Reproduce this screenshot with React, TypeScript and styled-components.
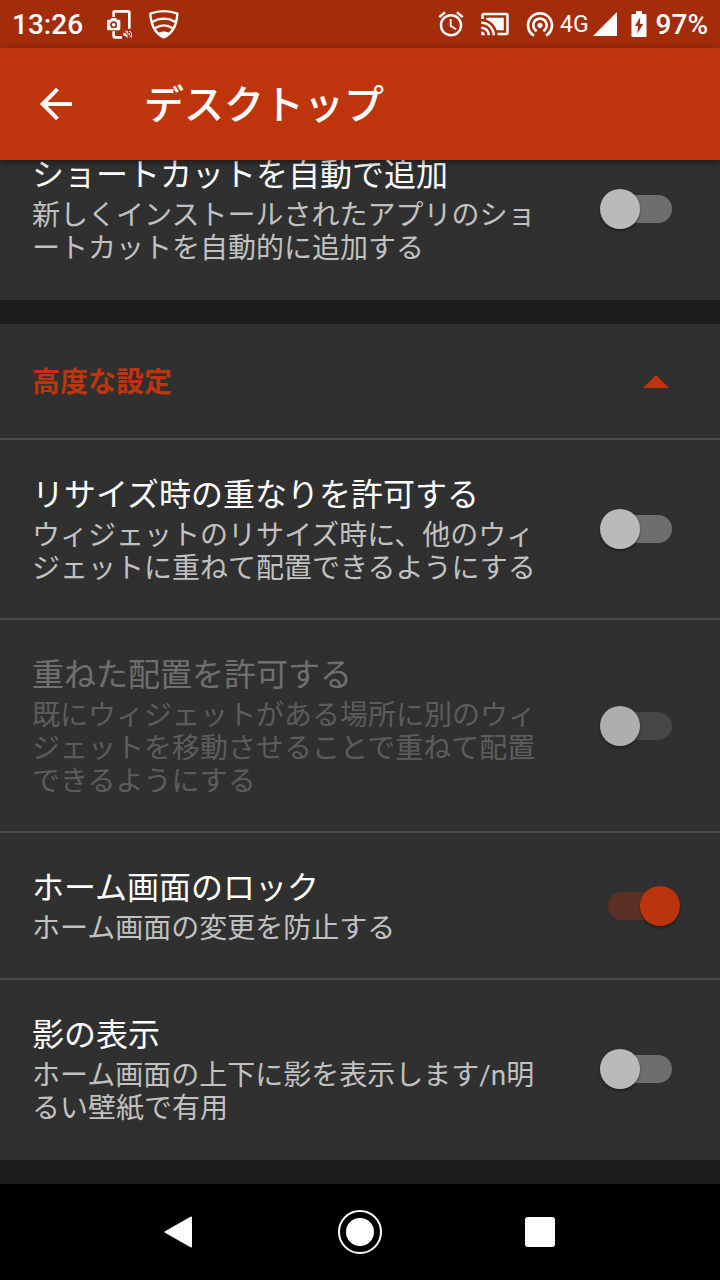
import React, { useState } from "react";
import styled, { createGlobalStyle } from "styled-components";
import { MdAlarm, MdCastConnected, MdWifiTethering } from "react-icons/md";

const accent = "#be340c";

const GlobalStyle = createGlobalStyle`
  *, *::before, *::after { box-sizing: border-box; }
  body {
    margin: 0;
    background: #1d1d1d;
    font-family: Roboto, "Noto Sans CJK JP", sans-serif;
    color: #fff;
  }
`;

const Screen = styled.div`
  display: flex;
  flex-direction: column;
  min-height: 100vh;
`;

const StatusBar = styled.div`
  display: flex;
  align-items: center;
  justify-content: space-between;
  height: 48px;
  padding: 2px 12px 0;
  background: #a32c0b;
  font-size: 28px;
  font-weight: 500;
  line-height: 32px;
`;

const StatusGroup = styled.div<{ $gap: number }>`
  display: flex;
  align-items: center;
  gap: ${(p) => p.$gap}px;

  svg {
    display: block;
    flex: none;
    margin-bottom: 2px;
  }
`;

const NetworkType = styled.span`
  font-size: 23px;
  font-weight: 400;
`;

const AppBar = styled.header`
  position: relative;
  z-index: 1;
  display: flex;
  align-items: center;
  gap: 64px;
  height: 112px;
  padding: 0 32px;
  background: ${accent};
  box-shadow: 0 2px 8px rgba(0, 0, 0, 0.5);
`;

const IconButton = styled.button`
  display: flex;
  align-items: center;
  justify-content: center;
  width: 48px;
  height: 48px;
  padding: 0;
  border: 0;
  background: none;
  color: inherit;
`;

const Title = styled.h1`
  margin: 0;
  padding-top: 4px;
  font-size: 40px;
  font-weight: 500;
  line-height: 48px;
`;

const List = styled.main`
  flex: 1;
  overflow: hidden;
`;

const Scrolled = styled.div`
  display: flex;
  flex-direction: column;
  gap: 24px;
  margin-top: -40px;
  padding-bottom: 24px;
`;

const Card = styled.section`
  background: #303030;
`;

const SectionToggle = styled.button`
  display: flex;
  align-items: center;
  justify-content: space-between;
  width: 100%;
  height: 116px;
  padding: 2px 50px 0 32px;
  border: 0;
  border-bottom: 2px solid #4a4a4a;
  background: none;
  color: ${accent};
  font-family: inherit;
  font-size: 28px;
  font-weight: 700;
  line-height: 33px;
`;

const Row = styled.label`
  display: flex;
  align-items: center;
  gap: 48px;
  padding: 34px 40px 34px 32px;
  border-bottom: 2px solid #4a4a4a;

  &:last-child {
    border-bottom-color: #303030;
  }
`;

const RowText = styled.span<{ $disabled: boolean }>`
  display: flex;
  flex: 1;
  flex-direction: column;
  gap: 4px;
  padding-top: 2px;
  opacity: ${(p) => (p.$disabled ? 0.3 : 1)};
  line-break: anywhere;
`;

const RowTitle = styled.span`
  font-size: 32px;
  line-height: 38px;
`;

const RowDescription = styled.span`
  padding-top: 1px;
  margin-bottom: -1px;
  color: #c1c1c1;
  font-size: 28px;
  line-height: 33px;
`;

const Switch = styled.input`
  appearance: none;
  position: relative;
  flex: none;
  width: 80px;
  height: 40px;
  margin: 0;

  &::before {
    content: "";
    position: absolute;
    inset: 6px 8px;
    border-radius: 14px;
    background: #6e6e6e;
  }

  &::after {
    content: "";
    position: absolute;
    top: 0;
    left: 0;
    width: 40px;
    height: 40px;
    border-radius: 50%;
    background: #bababa;
    box-shadow: 0 2px 3px rgba(0, 0, 0, 0.35);
  }

  &:checked::before {
    background: #5b3025;
  }

  &:checked::after {
    left: 40px;
    background: #ba340c;
  }

  &:disabled::before {
    background: #464646;
  }

  &:disabled::after {
    background: #aeaeae;
  }
`;

const NavBar = styled.nav`
  display: flex;
  align-items: center;
  justify-content: space-around;
  height: 96px;
  padding: 0 12.5%;
  background: #000;
`;

const ScreenshotIcon = () => (
  <svg width="27" height="31" viewBox="318 26 81 93" fill="none" aria-hidden="true">
    <path d="M341 50V36q0-3 3-3h41q3 0 3 3v49" stroke="#fff" strokeWidth="8" />
    <path d="M341 93v15q0 3 3 3h22" stroke="#fff" strokeWidth="8" />
    <path
      fill="#fff"
      fillRule="evenodd"
      d="M325 58h6l3-5h14l3 5h6q4 0 4 4v24q0 4-4 4h-32q-4 0-4-4V62q0-4 4-4zM341 63a10.500 10.500 0 1 0 0 21a10.500 10.500 0 1 0 0-21z"
    />
    <circle cx="341" cy="73.500" r="5.500" fill="#fff" />
    <path d="M370 97h6l7-7v23l-7-7h-6z" fill="#fff" />
    <path d="M387 92q8 3 8 10t-6 11M387 98q3 4 0 8" stroke="#fff" strokeWidth="3" />
    <path d="M371 91l24 22" stroke="#a32c0b" strokeWidth="4" />
    <path d="M374 90l22 22" stroke="#fff" strokeWidth="2" />
  </svg>
);

const ShieldIcon = () => (
  <svg width="32" height="31" viewBox="443 26 96 93" fill="none" stroke="#fff" aria-hidden="true">
    <path
      d="M450 40q41-15 81 0q-1 25-11 44q-10 18-30 27q-19-9-29-27q-10-19-11-44z"
      strokeWidth="7"
      strokeLinejoin="round"
    />
    <path d="M455 65q36-20 71 0M464 84q27-18 53 0" strokeWidth="7" />
    <path d="M475 98q15-8 31 0l-16 12z" fill="#fff" strokeWidth="2" />
  </svg>
);

const SignalIcon = () => (
  <svg width="24" height="24" viewBox="0 0 24 24" aria-hidden="true">
    <path d="M24 0v24H0z" fill="#fff" />
  </svg>
);

const BatteryIcon = () => (
  <svg width="16" height="26" viewBox="0 0 16 26" aria-hidden="true">
    <path d="M5 0h6v3h3.500q1 0 1 1v21q0 1-1 1h-13q-1 0-1-1V4q0-1 1-1H5z" fill="#fff" />
    <path d="M9.300 6L4 15h3.200L6.200 22.500l6-9.500H8.800z" fill="#a32c0b" />
  </svg>
);

const BackArrow = () => (
  <svg width="34" height="34" viewBox="0 0 34 34" fill="none" stroke="#fff" strokeWidth="4" aria-hidden="true">
    <path d="M33 17H4M18.500 2.200L3.700 17l14.800 14.800" />
  </svg>
);

interface Setting {
  title: string;
  description: string;
  on?: boolean;
  disabled?: boolean;
}

const general: Setting[] = [
  {
    title: "ショートカットを自動で追加",
    description: "新しくインストールされたアプリのショートカットを自動的に追加する",
  },
];

const advanced: Setting[] = [
  {
    title: "リサイズ時の重なりを許可する",
    description: "ウィジェットのリサイズ時に、他のウィジェットに重ねて配置できるようにする",
  },
  {
    title: "重ねた配置を許可する",
    description: "既にウィジェットがある場所に別のウィジェットを移動させることで重ねて配置できるようにする",
    disabled: true,
  },
  {
    title: "ホーム画面のロック",
    description: "ホーム画面の変更を防止する",
    on: true,
  },
  {
    title: "影の表示",
    description: "ホーム画面の上下に影を表示します/n明るい壁紙で有用",
  },
];

const SettingRow = ({ title, description, on = false, disabled = false }: Setting) => (
  <Row>
    <RowText $disabled={disabled}>
      <RowTitle>{title}</RowTitle>
      <RowDescription>{description}</RowDescription>
    </RowText>
    <Switch type="checkbox" defaultChecked={on} disabled={disabled} />
  </Row>
);

export default function App() {
  const [open, setOpen] = useState(true);

  return (
    <Screen lang="ja">
      <GlobalStyle />
      <StatusBar>
        <StatusGroup $gap={15}>
          <StatusGroup $gap={23}>
            <span>13:26</span>
            <ScreenshotIcon />
          </StatusGroup>
          <ShieldIcon />
        </StatusGroup>
        <StatusGroup $gap={14}>
          <MdAlarm size={30} />
          <MdCastConnected size={30} />
          <StatusGroup $gap={4}>
            <MdWifiTethering size={32} />
            <NetworkType>4G</NetworkType>
            <SignalIcon />
          </StatusGroup>
          <StatusGroup $gap={9}>
            <BatteryIcon />
            <span>97%</span>
          </StatusGroup>
        </StatusGroup>
      </StatusBar>
      <AppBar>
        <IconButton type="button" aria-label="戻る">
          <BackArrow />
        </IconButton>
        <Title>デスクトップ</Title>
      </AppBar>
      <List>
        <Scrolled>
          <Card>
            {general.map((s) => (
              <SettingRow key={s.title} {...s} />
            ))}
          </Card>
          <Card>
            <SectionToggle type="button" aria-expanded={open} onClick={() => setOpen(!open)}>
              高度な設定
              <svg width="28" height="14" viewBox="0 0 28 14" aria-hidden="true">
                <path d={open ? "M14 0l13 13H1z" : "M1 0h26L14 13z"} fill={accent} />
              </svg>
            </SectionToggle>
            {open && advanced.map((s) => <SettingRow key={s.title} {...s} />)}
          </Card>
        </Scrolled>
      </List>
      <NavBar>
        <IconButton type="button" aria-label="戻る">
          <svg width="32" height="32" viewBox="0 0 32 32" aria-hidden="true">
            <path
              d="M27 1.500v29L1.500 16z"
              fill="#fff"
              stroke="#fff"
              strokeWidth="2"
              strokeLinejoin="round"
            />
          </svg>
        </IconButton>
        <IconButton type="button" aria-label="ホーム">
          <svg width="44" height="44" viewBox="0 0 44 44" aria-hidden="true">
            <circle cx="22" cy="22" r="21" fill="none" stroke="#fff" strokeWidth="2" />
            <circle cx="22" cy="22" r="14" fill="#fff" />
          </svg>
        </IconButton>
        <IconButton type="button" aria-label="アプリ履歴">
          <svg width="30" height="30" viewBox="0 0 30 30" aria-hidden="true">
            <rect width="30" height="30" rx="3" fill="#fff" />
          </svg>
        </IconButton>
      </NavBar>
    </Screen>
  );
}
